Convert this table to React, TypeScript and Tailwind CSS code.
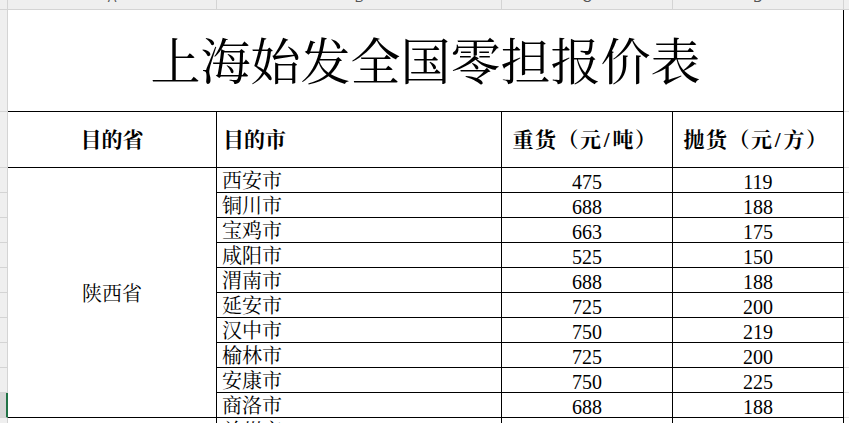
import React from "react";

const serif = "font-['Liberation_Serif','Noto_Serif_CJK_SC','Noto_Sans_CJK_SC',serif]";

const cities = [
  { city: "西安市", heavy: "475", light: "119" },
  { city: "铜川市", heavy: "688", light: "188" },
  { city: "宝鸡市", heavy: "663", light: "175" },
  { city: "咸阳市", heavy: "525", light: "150" },
  { city: "渭南市", heavy: "688", light: "188" },
  { city: "延安市", heavy: "725", light: "200" },
  { city: "汉中市", heavy: "750", light: "219" },
  { city: "榆林市", heavy: "725", light: "200" },
  { city: "安康市", heavy: "750", light: "225" },
  { city: "商洛市", heavy: "688", light: "188" },
];

function ColLetter({ letter }: { letter: string }) {
  return (
    <div className="h-full bg-[#efefef] border-r border-b border-[#d4d4d4] flex justify-center overflow-hidden">
      <span className="mt-[-9px] text-[13px] leading-none text-[#555] font-['Liberation_Sans',sans-serif]">
        {letter}
      </span>
    </div>
  );
}

function RowHead({ selected = false }: { selected?: boolean }) {
  return selected ? (
    <div className="bg-[#d6d6d6] border-r-2 border-r-[#217346] border-b border-b-[#d4d4d4]" />
  ) : (
    <div className="bg-[#efefef] border-r border-b border-[#d4d4d4]" />
  );
}

const gridLine = <div className="border-b border-[#e1e1e1]" />;

const slash = <span className="inline-block w-[10px] text-center">/</span>;

export default function App() {
  return (
    <div className={`w-[849px] h-[423px] overflow-hidden bg-white text-black ${serif}`}>
      <div className="grid grid-cols-[8px_209px_285px_171px_171px_6px] grid-rows-[10px_102px_56px_repeat(11,25px)]">
        {/* column header strip */}
        <div className="bg-[#efefef] border-r border-b border-[#d4d4d4]" />
        <ColLetter letter="A" />
        <ColLetter letter="B" />
        <ColLetter letter="C" />
        <ColLetter letter="D" />
        <div className="bg-[#efefef] border-b border-[#d4d4d4]" />

        {/* title */}
        <RowHead />
        <div className="col-span-4 border-r border-b border-black flex items-center justify-center">
          <span className="text-[50px] leading-none pt-[4px]">上海始发全国零担报价表</span>
        </div>
        {gridLine}

        {/* table header */}
        <RowHead />
        <div className="border-r border-b border-black flex items-center justify-center pt-[3px] text-[21px] font-bold">
          目的省
        </div>
        <div className="border-r border-b border-black flex items-center pl-[6px] pt-[3px] text-[21px] font-bold">
          目的市
        </div>
        <div className="border-r border-b border-black flex items-center justify-center pt-[3px] pr-[4px] text-[21px] font-bold tracking-[1.5px]">
          <span>重货（元{slash}吨）</span>
        </div>
        <div className="border-r border-b border-black flex items-center justify-center pt-[3px] pr-[4px] text-[21px] font-bold tracking-[1.5px]">
          <span>抛货（元{slash}方）</span>
        </div>
        {gridLine}

        {/* rows */}
        {cities.map((row, i) => (
          <React.Fragment key={row.city}>
            <RowHead selected={i === cities.length - 1} />
            {i === 0 && (
              <div className="row-span-10 border-r border-b border-black flex items-center justify-center pt-[2px] text-[20px]">
                陕西省
              </div>
            )}
            <div className="border-r border-b border-black flex items-center pl-[5px] pt-[2px] text-[20px] leading-none">
              {row.city}
            </div>
            <div className="border-r border-b border-black flex items-center justify-center pt-[4px] text-[20px] leading-none">
              {row.heavy}
            </div>
            <div className="border-r border-b border-black flex items-center justify-center pt-[4px] text-[20px] leading-none">
              {row.light}
            </div>
            {gridLine}
          </React.Fragment>
        ))}

        {/* next province, cut off */}
        <RowHead />
        <div className="border-r border-black" />
        <div className="border-r border-b border-black flex items-center pl-[5px] pt-[2px] text-[20px] leading-none">
          兰州市
        </div>
        <div className="border-r border-b border-black" />
        <div className="border-r border-b border-black" />
        {gridLine}
      </div>
    </div>
  );
}
